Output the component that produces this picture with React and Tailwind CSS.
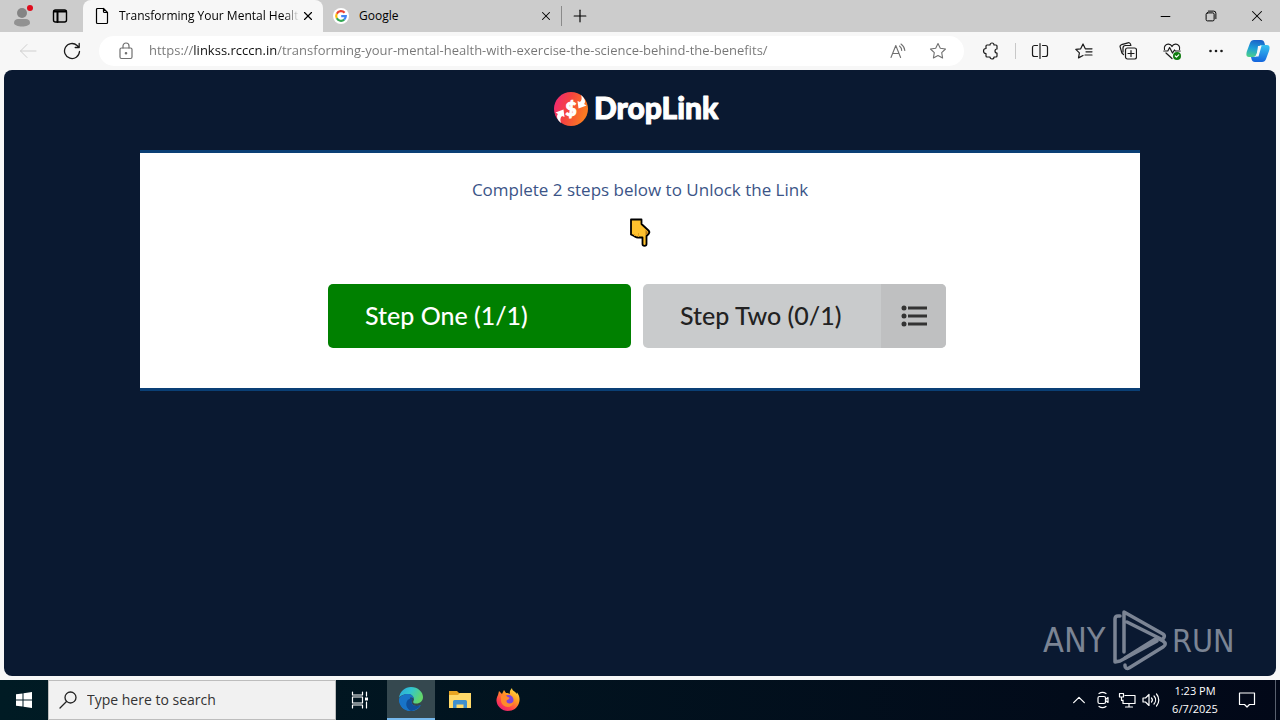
import { Minus, Plus, X } from 'lucide-react';

const ADDRESS = 'https://linkss.rcccn.in/transforming-your-mental-health-with-exercise-the-science-behind-the-benefits/';

function LineIcon({ size = 18, width = 1, className = '', children }) {
    return (
        <svg
            width={size}
            height={size}
            viewBox="0 0 18 18"
            fill="none"
            stroke="currentColor"
            strokeWidth={width}
            strokeLinecap="round"
            strokeLinejoin="round"
            className={className}
            aria-hidden="true"
        >
            {children}
        </svg>
    );
}

function GoogleIcon() {
    return (
        <svg width="16" height="16" viewBox="0 0 16 16" aria-hidden="true">
            <circle cx="8" cy="8" r="8" fill="#fff" />
            <g fill="none" strokeWidth="2.2">
                <path d="M11.6 4.7A4.8 4.8 0 0 0 3.8 5.7" stroke="#ea4335" />
                <path d="M3.8 5.7A4.8 4.8 0 0 0 3.8 10.3" stroke="#fbbc05" />
                <path d="M3.8 10.3A4.8 4.8 0 0 0 11.2 11.6" stroke="#34a853" />
                <path d="M11.2 11.6A4.8 4.8 0 0 0 12.8 8.1H8.2" stroke="#4285f4" />
            </g>
        </svg>
    );
}

function TitleBar() {
    return (
        <header className="flex h-8 shrink-0 bg-[#cccccc] text-xs text-black">
            <div className="flex w-[83px] items-center">
                <button aria-label="Profile" className="flex w-11 justify-center">
                    <svg width="22" height="26" viewBox="0 0 22 26" aria-hidden="true">
                        <circle cx="11" cy="10" r="5" fill="#848484" />
                        <path d="M3 20c0-3 2-4 4-4h8c2 0 4 1 4 4 0 2-4 3.500-8 3.500S3 22 3 20z" fill="#929292" />
                        <circle cx="19" cy="5" r="3" fill="#e00b1c" />
                    </svg>
                </button>
                <button aria-label="Tab actions" className="flex w-8 justify-center">
                    <LineIcon width={1.4}>
                        <rect x="2.500" y="3" width="13" height="12" rx="2" />
                        <path d="M3 4.500h12M6.500 5v10" strokeWidth="2" />
                    </LineIcon>
                </button>
            </div>

            <div className="flex w-60 items-center rounded-t-lg bg-[#f7f7f7] pr-1.5 pl-2.5">
                <LineIcon width={1.2}>
                    <path d="M10.500 1.500H4.500a1 1 0 0 0-1 1v13a1 1 0 0 0 1 1h9a1 1 0 0 0 1-1V5.500l-4-4v3a1 1 0 0 0 1 1h3" />
                </LineIcon>
                <span className="ml-2 min-w-0 flex-1 overflow-hidden mask-r-from-92% whitespace-nowrap">
                    Transforming Your Mental Health
                </span>
                <button aria-label="Close tab" className="p-0.5">
                    <X size={14} strokeWidth={2} />
                </button>
            </div>

            <div className="flex w-[238px] items-center pr-1.5 pl-2.5">
                <GoogleIcon />
                <span className="ml-2.5 flex-1">Google</span>
                <button aria-label="Close tab" className="p-0.5">
                    <X size={14} strokeWidth={1.8} />
                </button>
            </div>

            <div className="flex items-center">
                <span className="h-5 w-px bg-[#8a8a8a]" />
                <button aria-label="New tab" className="flex w-9 justify-center">
                    <Plus size={20} strokeWidth={1.4} />
                </button>
            </div>

            <div className="ml-auto flex">
                <button aria-label="Minimize" className="flex w-[46px] items-center justify-center">
                    <Minus size={15} strokeWidth={1.6} />
                </button>
                <button aria-label="Restore" className="flex w-[46px] items-center justify-center">
                    <LineIcon size={16} width={1.1}>
                        <rect x="3.500" y="5.500" width="9" height="9" rx="1.500" />
                        <path d="M6 3.500h6a2.500 2.500 0 0 1 2.500 2.500v6" />
                    </LineIcon>
                </button>
                <button aria-label="Close" className="flex w-[46px] items-center justify-center">
                    <X size={18} strokeWidth={1.4} />
                </button>
            </div>
        </header>
    );
}

function ToolButton({ label, className = 'w-11', children }) {
    return (
        <button aria-label={label} className={`flex h-8 items-center justify-center ${className}`}>
            {children}
        </button>
    );
}

function Toolbar() {
    return (
        <div className="flex h-[38px] shrink-0 items-center bg-[#f7f7f7] pr-0.5 pl-1.5 text-[#1b1b1b]">
            <ToolButton label="Back" className="w-11 text-[#cfcfcf]">
                <LineIcon>
                    <path d="M17 9H1.500M8 2.500 1.500 9 8 15.500" />
                </LineIcon>
            </ToolButton>
            <ToolButton label="Refresh">
                <LineIcon width={1.3}>
                    <path d="M16.500 9.500a7.500 7.500 0 1 1-2.400-6l1.900 1.800M16.200 1.500v4h-4" />
                </LineIcon>
            </ToolButton>

            <div className="mx-[5px] flex h-[30px] flex-1 items-center rounded-full bg-white pr-3 pl-[18px] text-[#707070]">
                <LineIcon width={1.2}>
                    <rect x="3" y="6" width="12" height="10.500" rx="1.500" />
                    <path d="M6 6V4a3 3 0 0 1 6 0v2" />
                    <circle cx="9" cy="11.200" r="0.700" fill="currentColor" />
                </LineIcon>
                <input
                    type="text"
                    aria-label="Address"
                    defaultValue={ADDRESS}
                    className="ml-3.5 min-w-0 flex-1 bg-[linear-gradient(to_right,#757575_45px,#111_45px,#111_128px,#757575_128px)] bg-clip-text text-[13px] text-transparent outline-none"
                />
                <button aria-label="Read aloud" className="flex w-7 justify-center">
                    <LineIcon width={1.1}>
                        <path d="M2 15.500 6.800 3.500 11.600 15.500M3.800 11.500h6M10.500 4a6 6 0 0 1 2.200 4.500M12 2a9 9 0 0 1 3.800 6.500" />
                    </LineIcon>
                </button>
                <button aria-label="Add to favorites" className="ml-3 flex w-7 justify-center">
                    <LineIcon width={1.1}>
                        <path d="m9 1.500 2.300 4.800 5.200.7-3.800 3.700.9 5.300L9 13.500 4.400 16l.9-5.300L1.500 7l5.200-.7z" />
                    </LineIcon>
                </button>
            </div>

            <ToolButton label="Extensions">
                <LineIcon width={1.2}>
                    <path d="M5 3h3a2 2 0 0 1 4 0h2a1 1 0 0 1 1 1v3a2 2 0 0 0 0 4v3a1 1 0 0 1-1 1h-2a2 2 0 0 1-4 0H5a1 1 0 0 1-1-1v-2.500a2.500 2.500 0 0 1 0-5V4a1 1 0 0 1 1-1z" />
                </LineIcon>
            </ToolButton>
            <span className="mx-0.5 h-4 w-px bg-[#c8c8c8]" />
            <ToolButton label="Split screen">
                <LineIcon width={1.2}>
                    <path d="M6.500 3.500h-3a2 2 0 0 0-2 2v7a2 2 0 0 0 2 2h3M11.500 3.500h3a2 2 0 0 1 2 2v7a2 2 0 0 1-2 2h-3M9 1.500v15" />
                </LineIcon>
            </ToolButton>
            <ToolButton label="Favorites">
                <LineIcon width={1.2}>
                    <path d="M14 6.800H10.300L8 2 5.700 6.800.8 7.400l3.600 3.500-.9 5 4.500-2.400M11 9.800h6M10 13h7M13 6.800h4" />
                </LineIcon>
            </ToolButton>
            <ToolButton label="Collections">
                <LineIcon width={1.2}>
                    <rect x="6.500" y="6" width="11" height="11" rx="2" />
                    <path d="M12 8.500v6M9 11.500h6M4.500 12.500 2.900 11 1.200 5.200A2 2 0 0 1 2.500 2.700l6.500-1.900a2 2 0 0 1 2.500 1.400l.4 1.300H6.500a2.500 2.500 0 0 0-2.500 2.500v4" />
                </LineIcon>
            </ToolButton>
            <ToolButton label="Browser essentials">
                <LineIcon width={1.2}>
                    <path d="M1.500 7.500C.5 4.500 3 2 5.500 2.200 7.500 2.400 8.500 3.500 9 4.500c.5-1 1.500-2.100 3.500-2.300 2.500-.2 5 2.300 4 5.300M.8 9h4l1.800-3.500L9.500 11l2-3 .8 1h4.900M3 11l6 5.500" />
                    <circle cx="14" cy="14" r="4" fill="#107c10" stroke="none" />
                    <path d="m12.300 14 1.200 1.200 2.200-2.300" stroke="#fff" />
                </LineIcon>
            </ToolButton>
            <ToolButton label="Settings and more">
                <LineIcon>
                    <g fill="currentColor" stroke="none">
                        <circle cx="3.500" cy="9" r="1.300" />
                        <circle cx="9" cy="9" r="1.300" />
                        <circle cx="14.500" cy="9" r="1.300" />
                    </g>
                </LineIcon>
            </ToolButton>
            <ToolButton label="Copilot" className="w-10">
                <svg width="24" height="24" viewBox="0 0 24 24" aria-hidden="true">
                    <defs>
                        <linearGradient id="copilotLeft" x1="0.500" y1="0" x2="0.300" y2="1">
                            <stop offset="0" stopColor="#1a63c9" />
                            <stop offset="0.500" stopColor="#1d9fd8" />
                            <stop offset="1" stopColor="#4bcf8a" />
                        </linearGradient>
                        <linearGradient id="copilotRight" x1="0.500" y1="0" x2="0.400" y2="1">
                            <stop offset="0" stopColor="#35c0f0" />
                            <stop offset="1" stopColor="#1464dd" />
                        </linearGradient>
                    </defs>
                    <path d="M8 1h7c2 0 3 1 3.500 3l.5 2h-3c-2 0-3 1-3.500 3l-2 6c-.5 2-1.500 3-3.500 3H3c-3 0-3-3-2-6L4 4c.7-2 2-3 4-3z" fill="url(#copilotLeft)" />
                    <path d="M16 23H9c-2 0-3-1-3.500-3L5 18h3c2 0 3-1 3.500-3l2-6c.5-2 1.500-3 3.500-3h4c3 0 3 3 2 6l-3 8c-.7 2-2 3-4 3z" fill="url(#copilotRight)" />
                    <path d="M12 7h3.500l-3 10.500H8.500c1.500-.5 2-1.500 2.500-3z" fill="#f7f7f7" />
                </svg>
            </ToolButton>
        </div>
    );
}

function DropLinkLogo() {
    return (
        <svg width="172" height="40" viewBox="0 0 172 40" role="img" aria-label="DropLink">
            <defs>
                <linearGradient id="coin" x1="0" y1="0" x2="1" y2="0.300">
                    <stop offset="0" stopColor="#f0247c" />
                    <stop offset="0.500" stopColor="#f5443f" />
                    <stop offset="1" stopColor="#fb7a22" />
                </linearGradient>
            </defs>
            <circle cx="19" cy="19" r="17" fill="url(#coin)" />
            <text
                x="19"
                y="26"
                textAnchor="middle"
                fontSize="19"
                fontWeight="900"
                fill="#fff"
                stroke="#fff"
                className="font-['Lato',sans-serif]"
            >
                $
            </text>
            <path d="M29 5c4 3 5 7 3 9l2.500 1.500-8 3-1-7.500 2.500 1c2-2 2-4 1-7zM9 33c-4-3-5-7-3-9l-2.500-1.500 8-3 1 7.500-2.500-1c-2 2-2 4-1 7z" fill="#fff" />
            <text
                x="42"
                y="29"
                fontSize="30"
                fontWeight="900"
                fill="#fff"
                stroke="#fff"
                strokeWidth="1"
                strokeLinejoin="round"
                className="font-['Lato',sans-serif]"
            >
                DropLink
            </text>
        </svg>
    );
}

function PointingHand() {
    return (
        <svg width="24" height="30" viewBox="0 0 24 30" role="img" aria-label="Pointing down">
            <path
                d="M3 2.500h10.500V7l7 6.500c1 1 1 2.500 0 3.500l-2 2v8c0 2.500-4 2.500-4 0v-6.500h-4.500c-2 0-3-1-4-1.500L3 17.500z"
                fill="#ffc22e"
                stroke="#000"
                strokeWidth="1.800"
                strokeLinejoin="round"
            />
            <path d="m17.500 13 2 2v2l-2 1z" fill="#b5781a" />
            <path d="M6.500 17v2M10.500 16v4" stroke="#e3a11d" />
        </svg>
    );
}

function Watermark() {
    return (
        <svg
            width="196"
            height="64"
            viewBox="0 0 196 64"
            role="img"
            aria-label="ANY RUN"
            className="absolute right-10 bottom-1"
        >
            <g fill="#7b8494" className="font-['DejaVu_Sans_Condensed','DejaVu_Sans',sans-serif]">
                <text x="3" y="44" fontSize="34">ANY</text>
                <text x="132" y="44" fontSize="32">RUN</text>
            </g>
            <g fill="none" stroke="#7b8494" strokeWidth="3.500" strokeLinejoin="round" strokeLinecap="round">
                <path d="M80 8h-2c-2 0-3 1-3 3v43l5-1 37-20" />
                <path d="M84 44V4l39 22c3 2 0 6-2 5L87 14" />
                <path d="M85 57v1c0 2 2 3 4 2l34-21c3-2 3-4 0-6l-6-3-32 20" />
            </g>
        </svg>
    );
}

function Page() {
    return (
        <main className="relative flex-1 overflow-hidden rounded-lg bg-[#0a1931] px-4 pt-5">
            <div className="flex justify-center pr-1 pb-5">
                <DropLinkLogo />
            </div>

            <section className="mx-auto max-w-[1000px] border-y-3 border-[#0a3f75] bg-white pt-[25px] pb-10 text-center">
                <h1 className="text-[17px] leading-6 font-medium text-[#3b5487]">Complete 2 steps below to Unlock the Link</h1>
                <div className="mt-[15px] flex justify-center">
                    <PointingHand />
                </div>

                <div className="mt-[37px] flex justify-center gap-3 pr-1.5 font-['Lato',sans-serif] text-[25px] font-medium">
                    <button className="h-16 w-[303px] rounded-[5px] bg-[#008000] pl-[37px] text-left text-white">
                        Step One (1/1)
                    </button>
                    <button className="flex h-16 w-[303px] items-center overflow-hidden rounded-[5px] bg-[#c9cbcc] pl-[37px] text-[#222]">
                        <span>Step Two (0/1)</span>
                        <span className="ml-auto flex h-full w-[65px] items-center justify-center bg-[#bfc0c1]">
                            <svg width="26" height="22" viewBox="0 0 26 22" fill="#333" aria-hidden="true">
                                <circle cx="3" cy="3" r="2.500" />
                                <circle cx="3" cy="11" r="2.500" />
                                <circle cx="3" cy="19" r="2.500" />
                                <path d="M7 1.500h19v3H7zM7 9.500h19v3H7zM7 17.500h19v3H7z" />
                            </svg>
                        </span>
                    </button>
                </div>
            </section>

            <Watermark />
        </main>
    );
}

function EdgeIcon() {
    return (
        <svg width="24" height="24" viewBox="0 0 24 24" aria-hidden="true">
            <defs>
                <linearGradient id="edgeTop" x1="0" y1="0" x2="1" y2="0.400">
                    <stop offset="0" stopColor="#2aa5dc" />
                    <stop offset="0.500" stopColor="#32c5cf" />
                    <stop offset="1" stopColor="#62d66b" />
                </linearGradient>
            </defs>
            <path d="M0 12C0 19 5 24 12 24c4 0 8-2 9.800-6-4 2-9 1-9.300-3L9 6z" fill="#1b7fd0" />
            <path d="M0 11C1 4 6 0 12 0c7 0 12 5 12 10 0 4-3 6.500-6.500 6.500-3 0-4-1.300-3-2.600C16 12 14 7 9 7 5 7 1 9 0 11z" fill="url(#edgeTop)" />
            <path d="M9 7c-4 0-8 2-9 5 0 7 5 12 11 12-3-2-5-6-3-10 .7-1.500 2-3 3.500-3.500 1-.3 3 .3 3.200 1.500C14.500 8.500 12 7 9 7z" fill="#1874c8" />
            <path d="M8 14c-2 4 0 8 4 10 4-.3 8-3 9.800-6-4 2-9 1-9.300-3-.1-1.500.8-2.500 1.500-3-2-2-5 0-6 2z" fill="#104f9a" />
        </svg>
    );
}

function FolderIcon() {
    return (
        <svg width="22" height="20" viewBox="0 0 22 20" aria-hidden="true">
            <path d="M0 1h8l2 2h12v4H0z" fill="#e8a522" />
            <path d="M0 5h9l2-2h11v15H0z" fill="#ffd969" />
            <path d="M4 18v-6.500A1.500 1.500 0 0 1 5.500 10h11a1.500 1.500 0 0 1 1.500 1.500V18h-3.500v-3.500h-7V18z" fill="#3f8fcd" />
        </svg>
    );
}

function FirefoxIcon() {
    return (
        <svg width="24" height="24" viewBox="0 0 24 24" aria-hidden="true">
            <defs>
                <linearGradient id="fox" x1="0.900" y1="0" x2="0.200" y2="1">
                    <stop offset="0" stopColor="#ffe84a" />
                    <stop offset="0.400" stopColor="#ff9a22" />
                    <stop offset="0.750" stopColor="#ff3d4d" />
                    <stop offset="1" stopColor="#e31c79" />
                </linearGradient>
            </defs>
            <path d="M2 7 3 3l3 3 2-4 2 3c2 0 3 .5 4 1-.5-2 0-4 2-6 0 3 3 3 5 6 0-1 0-1.500-.3-2C24 8 24 12 23 15c-1.500 5-6 8-11 8-6 0-11-4.500-11.500-10C.3 11 1 9 2 7z" fill="url(#fox)" />
            <circle cx="12.500" cy="12" r="5" fill="#7b44dc" />
            <path d="M5 8c2-1.500 5-1 6 .5 1 1 2 .5 2.500 1.500-.5 2-3 1.500-3 3s1 2.500 3 2.500 3-1 4-2c0 3-2.500 5.500-5.500 5.500-4 0-7-3-7-6.500C5 11 5 9.500 5 8z" fill="#ff8a2b" />
        </svg>
    );
}

function Taskbar() {
    return (
        <footer className="flex h-10 shrink-0 items-stretch bg-linear-to-r from-[#001b24] to-[#020818] text-white">
            <button aria-label="Start" className="flex w-12 items-center justify-center">
                <svg width="16" height="16" viewBox="0 0 16 16" fill="#fff" aria-hidden="true">
                    <path d="M0 2.300 6.500 1.400V7.500H0zM7.500 1.200 16 0v7.500H7.500zM0 8.500h6.500v6.100L0 13.700zM7.500 8.500H16V16l-8.500-1.200z" />
                </svg>
            </button>

            <label className="flex w-72 items-center border border-[#bdbdbd] bg-[#f1f1f1] pl-2.5 text-[#222]">
                <LineIcon width={1.3}>
                    <circle cx="11.500" cy="6.500" r="5.500" />
                    <path d="m7.500 10.500-6.500 6.500" />
                </LineIcon>
                <input
                    type="text"
                    aria-label="Search"
                    placeholder="Type here to search"
                    className="ml-2.5 min-w-0 flex-1 text-sm outline-none placeholder:text-[#333]"
                />
            </label>

            <button aria-label="Task view" className="mr-[3px] flex w-12 items-center justify-center">
                <LineIcon width={1.2}>
                    <path d="M1.500 1v3h10V1M1.500 17v-3h10v3M1.500 6h10v6h-10zM15.500 1v4M15.500 11v6" />
                    <path d="M14 6.500h3v3h-3z" fill="#fff" stroke="none" />
                </LineIcon>
            </button>
            <button aria-label="Microsoft Edge" className="mr-px flex w-12 items-center justify-center border-b-2 border-[#76b9ed] bg-[#35484f]">
                <EdgeIcon />
            </button>
            <button aria-label="File Explorer" className="flex w-12 items-center justify-center">
                <FolderIcon />
            </button>
            <button aria-label="Firefox" className="flex w-12 items-center justify-center">
                <FirefoxIcon />
            </button>

            <div className="ml-auto flex">
                <button aria-label="Show hidden icons" className="flex w-6 items-center justify-center">
                    <LineIcon size={16} width={1.4}>
                        <path d="m3 12 6-6 6 6" />
                    </LineIcon>
                </button>
                <button aria-label="Meet now" className="flex w-6 items-center justify-center">
                    <LineIcon width={1.2}>
                        <rect x="4" y="5.500" width="7.500" height="7" rx="1.500" />
                        <path d="m11.500 8.500 2.500-2v5l-2.500-2M5 2.500c2-1.300 5-1.300 7 0M5 15.500c2 1.300 5 1.300 7 0" />
                    </LineIcon>
                </button>
                <button aria-label="Network" className="flex w-6 items-center justify-center">
                    <LineIcon width={1.2}>
                        <path d="M7 4.500h10v8H5V9M11 12.500V16M7.500 16h7M1.500 2.500h4v3.500h-4zM3.500 6v3.500h1" />
                    </LineIcon>
                </button>
                <button aria-label="Volume" className="flex w-6 items-center justify-center">
                    <LineIcon width={1.2}>
                        <path d="M1 7h2.500L7 3.500v11L3.500 11H1zM9.500 7a3 3 0 0 1 0 4M12 5a6 6 0 0 1 0 8M14.500 3a9 9 0 0 1 0 12" />
                    </LineIcon>
                </button>
                <button className="flex w-16 flex-col items-center justify-center text-[11px] leading-[18px]">
                    <span>1:23 PM</span>
                    <span>6/7/2025</span>
                </button>
                <button aria-label="Notifications" className="flex w-10 items-center justify-center">
                    <LineIcon width={1.2}>
                        <path d="M1.500 2h15v11.500h-5L9 16l-2.500-2.500h-5z" />
                    </LineIcon>
                </button>
                <button aria-label="Show desktop" className="ml-2 w-[5px] border-l border-[#59606e]" />
            </div>
        </footer>
    );
}

function App() {
    return (
        <div className="flex h-screen min-w-[960px] flex-col bg-[#f7f7f7] font-['Open_Sans','Noto_Sans',sans-serif]">
            <TitleBar />
            <Toolbar />
            <div className="flex min-h-0 flex-1 px-1 pb-1">
                <Page />
            </div>
            <Taskbar />
        </div>
    );
}

export default App;
